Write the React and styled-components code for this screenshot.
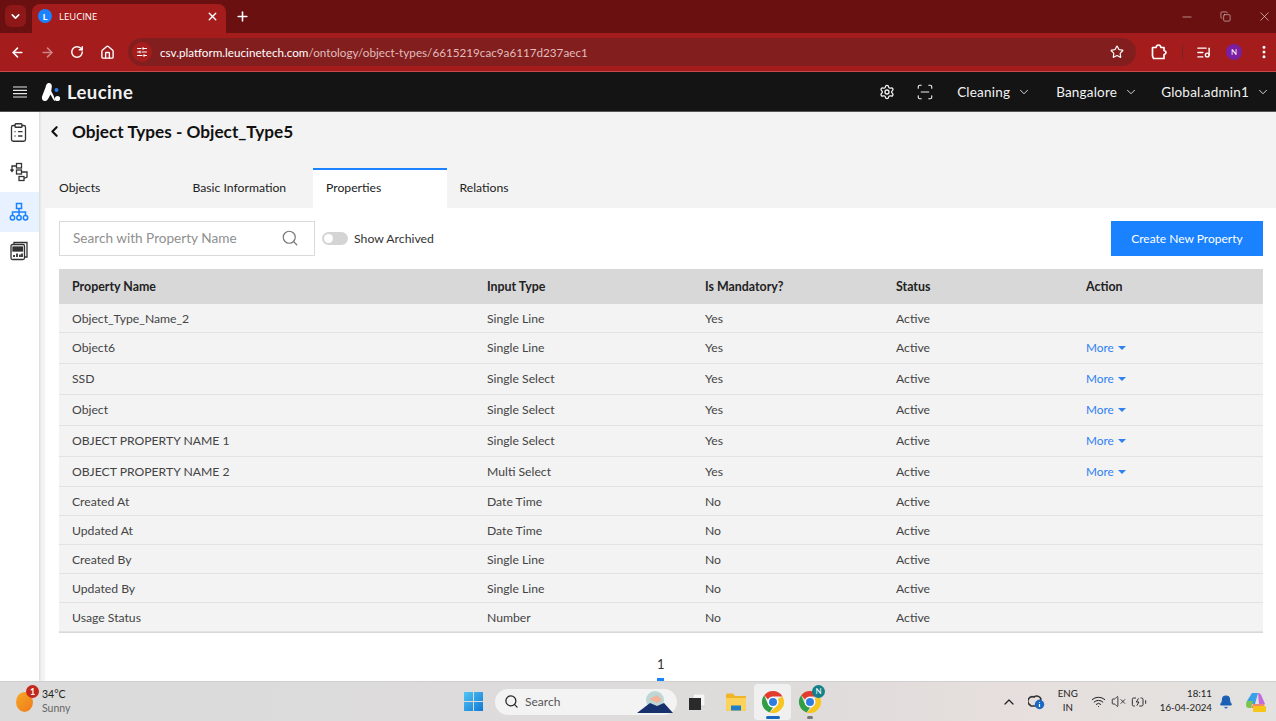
import React from 'react';
import styled, { createGlobalStyle } from 'styled-components';
import {
  ChevronDown, X, Plus, ArrowLeft, ArrowRight, RotateCw, Home, SlidersHorizontal, Star,
  EllipsisVertical, Minus, Settings, ScanLine, ChevronLeft, Search, ClipboardList,
  ChevronUp, Wifi, VolumeX, BatteryCharging, Bell, Copy, ListMusic,
} from 'lucide-react';

const GlobalStyle = createGlobalStyle`
  html, body { margin: 0; padding: 0; height: 100%; overflow: hidden; }
  body { font-family: "Lato", "Open Sans", sans-serif; background: #fff; }
  * { box-sizing: border-box; }
`;

const Page = styled.div`
  width: 1276px;
  height: 721px;
  display: flex;
  flex-direction: column;
  overflow: hidden;
`;

/* browser chrome */
const TabStrip = styled.div`
  height: 33px;
  background: #6b1010;
  display: flex;
  align-items: flex-end;
  padding-left: 5px;
  color: #fff;
`;
const TabMenu = styled.div`
  width: 21px;
  height: 22px;
  margin-bottom: 6px;
  border-radius: 6px;
  background: #8e1717;
  display: flex;
  align-items: center;
  justify-content: center;
`;
const ActiveTab = styled.div`
  width: 194px;
  height: 29px;
  margin-left: 6px;
  padding: 0 7px 5px 6px;
  border-radius: 8px 8px 0 0;
  background: #a51c1c;
  display: flex;
  align-items: center;
  gap: 7px;
  font-family: "Open Sans", sans-serif;
  font-size: 9.5px;
`;
const Favicon = styled.div`
  width: 14px;
  height: 14px;
  border-radius: 50%;
  background: #1a82ff;
  display: flex;
  align-items: center;
  justify-content: center;
  font-size: 9px;
  font-weight: 700;
`;
const TabTitle = styled.span`
  flex: 1;
`;
const NewTab = styled.div`
  margin: 0 0 9px 9px;
  display: flex;
`;
const WindowControls = styled.div`
  margin-left: auto;
  height: 100%;
  display: flex;
  align-items: center;
  gap: 26px;
  padding-right: 4px;
  color: #f0e0e0;
`;
const Toolbar = styled.div`
  height: 39px;
  background: #a51c1c;
  border-bottom: 1px solid #c64a4a;
  display: flex;
  align-items: center;
  padding-left: 10px;
  color: #fff;
`;
const NavButton = styled.div`
  width: 30px;
  display: flex;
  justify-content: flex-start;
  color: ${(p) => (p.$dim ? '#cf8585' : '#fff')};
`;
const AddressBar = styled.div`
  width: 1008px;
  height: 28px;
  margin-left: -2px;
  border-radius: 14px;
  background: #831e1e;
  display: flex;
  align-items: center;
  padding: 0 12px 0 4px;
`;
const SiteIcon = styled.div`
  width: 20px;
  height: 20px;
  border-radius: 50%;
  background: #a51c1c;
  display: flex;
  align-items: center;
  justify-content: center;
  margin-right: 8px;
`;
const Url = styled.div`
  flex: 1;
  font-size: 11.7px;
  color: #e0bcbc;
  white-space: nowrap;
`;
const Host = styled.span`
  color: #fff;
`;
const ToolActions = styled.div`
  display: flex;
  align-items: center;
  margin-left: 15px;
`;
const Divider = styled.div`
  width: 1px;
  height: 14px;
  margin: 0 13px 0 15px;
  background: #7b2020;
`;
const Avatar = styled.div`
  width: 16px;
  height: 16px;
  margin: 0 14px 0 15px;
  border-radius: 50%;
  background: #7a1fa2;
  font-size: 8px;
  display: flex;
  align-items: center;
  justify-content: center;
`;

/* app header */
const AppHeader = styled.header`
  height: 40px;
  background: #141414;
  color: #f2f2f2;
  display: flex;
  align-items: center;
  padding: 0 6px 0 13px;
  border-bottom: 1px solid #555;
`;
const Brand = styled.div`
  display: flex;
  align-items: center;
  gap: 6px;
  margin-left: 14px;
  font-size: 18.5px;
  font-weight: 700;
  letter-spacing: 0.4px;
`;
const HeaderRight = styled.div`
  margin-left: auto;
  display: flex;
  align-items: center;
`;
const HeaderIcon = styled.div`
  display: flex;
  margin-right: ${(p) => p.$gap}px;
`;
const Selector = styled.div`
  display: flex;
  align-items: center;
  gap: 7px;
  margin-left: ${(p) => p.$left || 0}px;
  font-size: 13.5px;
  letter-spacing: 0.2px;
`;

/* body */
const Body = styled.div`
  flex: 1;
  display: flex;
  min-height: 0;
  background: #f3f3f3;
`;
const Sidebar = styled.nav`
  width: 39px;
  background: #fff;
  padding-top: 1px;
  box-shadow: 1px 0 2px rgba(0, 0, 0, 0.12);
`;
const SideItem = styled.div`
  height: 39.5px;
  padding-right: 2px;
  display: flex;
  align-items: center;
  justify-content: center;
  color: ${(p) => (p.$active ? '#1a82ff' : '#333')};
  background: ${(p) => (p.$active ? '#e7f1ff' : 'transparent')};
`;
const Main = styled.main`
  flex: 1;
  min-width: 0;
  display: flex;
  flex-direction: column;
`;
const TitleRow = styled.div`
  height: 56px;
  padding: 0 0 17px 7px;
  display: flex;
  align-items: center;
  gap: 9px;
  color: #111;
`;
const Title = styled.h1`
  margin: 0;
  font-size: 17.2px;
  font-weight: 700;
`;
const Tabs = styled.div`
  height: 40px;
  margin-left: 7px;
  display: flex;
`;
const TabItem = styled.div`
  width: 133.5px;
  padding: 0 0 3px 13px;
  display: flex;
  align-items: center;
  font-size: 12.2px;
  color: #222;
  background: ${(p) => (p.$active ? '#fff' : 'transparent')};
  border-top: 2px solid ${(p) => (p.$active ? '#1a82ff' : 'transparent')};
`;
const Panel = styled.section`
  flex: 1;
  margin-left: 6px;
  padding: 13px 13px 0 14px;
  background: #fff;
  display: flex;
  flex-direction: column;
`;
const Controls = styled.div`
  height: 35px;
  display: flex;
  align-items: center;
  margin-bottom: 13px;
`;
const SearchBox = styled.div`
  width: 256px;
  height: 35px;
  padding: 0 15px 1px 13px;
  border: 1px solid #dadada;
  display: flex;
  align-items: center;
  justify-content: space-between;
  font-size: 13.6px;
  color: #8f8f8f;
`;
const Toggle = styled.div`
  width: 26px;
  height: 13px;
  margin: 0 6px 0 7px;
  padding: 2px;
  border-radius: 7px;
  background: #d4d4d4;
`;
const ToggleKnob = styled.div`
  width: 9px;
  height: 9px;
  border-radius: 50%;
  background: #fff;
`;
const ToggleLabel = styled.span`
  font-size: 12.25px;
  color: #333;
`;
const CreateButton = styled.button`
  margin-left: auto;
  width: 152px;
  height: 35px;
  border: 0;
  background: #1a82ff;
  color: #fff;
  font-family: inherit;
  font-size: 12px;
`;
const Table = styled.div`
  display: flex;
  flex-direction: column;
  border-bottom: 1px solid #d8d8d8;
`;
const Row = styled.div`
  height: ${(p) => p.$height}px;
  padding: 0 0 ${(p) => (p.$lift ? 1 : 0)}px 13px;
  display: grid;
  grid-template-columns: 415px 218px 191px 190px 1fr;
  align-items: center;
  font-size: ${(p) => (p.$head ? 12.4 : 12.2)}px;
  color: ${(p) => (p.$head ? '#222' : '#444')};
  font-weight: ${(p) => (p.$head ? 700 : 400)};
  background: ${(p) => (p.$head ? '#d8d8d8' : '#f3f3f3')};
  border-bottom: ${(p) => (p.$head ? 'none' : '1px solid #e2e2e2')};
`;
const MoreLink = styled.span`
  display: flex;
  align-items: center;
  gap: 4px;
  font-size: 11.8px;
  color: #2f80f0;
`;
const Caret = styled.span`
  width: 0;
  height: 0;
  margin-top: 1px;
  border-left: 4px solid transparent;
  border-right: 4px solid transparent;
  border-top: 4px solid #2f80f0;
`;
const Pager = styled.div`
  flex: 1;
  padding-left: 598px;
  display: flex;
  align-items: flex-end;
`;
const PageNumber = styled.div`
  width: 7px;
  padding-bottom: 6px;
  font-size: 13px;
  color: #333;
  text-align: center;
  border-bottom: 3px solid #1a82ff;
`;

/* taskbar */
const Taskbar = styled.footer`
  height: 40px;
  display: flex;
  align-items: center;
  background: linear-gradient(90deg, #dbdbdb 0%, #dedbdb 60%, #e6dfdd 80%, #e2e2e0 100%);
  border-top: 1px solid #cfcfcf;
  color: #222;
`;
const Weather = styled.div`
  width: 464px;
  padding-left: 16px;
  display: flex;
  align-items: center;
  gap: 9px;
`;
const Sun = styled.div`
  position: relative;
  width: 17px;
  height: 20px;
  border-radius: 50%;
  background: linear-gradient(135deg, #f7a823, #ee7a1c);
`;
const SunBadge = styled.span`
  position: absolute;
  top: -7px;
  right: -6px;
  width: 13px;
  height: 13px;
  border-radius: 50%;
  background: #c4281c;
  color: #fff;
  font-size: 9px;
  font-weight: 700;
  display: flex;
  align-items: center;
  justify-content: center;
`;
const WeatherText = styled.div`
  font-size: 10.5px;
  line-height: 14px;
  padding-bottom: 1px;
`;
const WeatherSub = styled.div`
  color: #666;
`;
const TaskSearch = styled.div`
  width: 182px;
  height: 26px;
  margin-left: 12px;
  padding: 0 4px 0 9px;
  border-radius: 13px;
  background: #f4f3f3;
  display: flex;
  align-items: center;
  gap: 6px;
  font-size: 12px;
  color: #555;
`;
const SearchArt = styled.svg`
  margin-left: auto;
`;
const AppSlot = styled.div`
  position: relative;
  width: 37px;
  height: 36px;
  margin-left: ${(p) => p.$left || 0}px;
  display: flex;
  align-items: center;
  justify-content: center;
  border-radius: 4px;
  background: ${(p) => (p.$active ? '#f1f0f0' : 'transparent')};
`;
const AppMark = styled.span`
  position: absolute;
  bottom: 1px;
  left: 50%;
  transform: translateX(-50%);
  width: ${(p) => (p.$active ? 14 : 6)}px;
  height: 3px;
  border-radius: 2px;
  background: ${(p) => (p.$active ? '#1567c0' : '#777')};
`;
const AppBadge = styled.span`
  position: absolute;
  top: 1px;
  right: 3px;
  width: 13px;
  height: 13px;
  border-radius: 50%;
  background: #14808c;
  color: #fff;
  font-size: 8px;
  display: flex;
  align-items: center;
  justify-content: center;
`;
const Tray = styled.div`
  margin-left: auto;
  display: flex;
  align-items: center;
  padding-right: 9px;
`;
const TrayIcon = styled.div`
  display: flex;
  margin-left: ${(p) => p.$left}px;
`;
const TrayText = styled.div`
  margin-left: ${(p) => p.$left}px;
  padding-bottom: 3px;
  font-size: 9.7px;
  line-height: 14.5px;
  text-align: ${(p) => p.$align};
`;

const rows = [
  ['Object_Type_Name_2', 'Single Line', 'Yes', false, 29],
  ['Object6', 'Single Line', 'Yes', true, 31],
  ['SSD', 'Single Select', 'Yes', true, 31],
  ['Object', 'Single Select', 'Yes', true, 31],
  ['OBJECT PROPERTY NAME 1', 'Single Select', 'Yes', true, 31],
  ['OBJECT PROPERTY NAME 2', 'Multi Select', 'Yes', true, 30],
  ['Created At', 'Date Time', 'No', false, 29],
  ['Updated At', 'Date Time', 'No', false, 29],
  ['Created By', 'Single Line', 'No', false, 29],
  ['Updated By', 'Single Line', 'No', false, 29],
  ['Usage Status', 'Number', 'No', false, 29],
];

const MenuIcon = () => (
  <svg width="14" height="12" viewBox="0 0 14 12" stroke="#e8e8e8" strokeWidth="1.2">
    <path d="M0 1 H14 M0 4.3 H14 M0 7.6 H14 M0 11 H14" />
  </svg>
);

const LeucineLogo = () => (
  <svg width="20" height="20" viewBox="0 0 20 20">
    <path d="M8 1 C5.5 1 5 3.5 4.5 5.5 L1.2 14 C0.2 17 1.8 19 4.2 19 C6 19 6.8 17.5 7.6 16 L9.5 12.5 L12 17 C12.6 18.2 13.4 19 14.5 19 L12.5 13.5 L10.2 9 L10.8 5 C11.1 3 10 1 8 1 Z" fill="#fff" />
    <circle cx="16.5" cy="16.5" r="2.6" fill="#fff" />
    <circle cx="15.5" cy="8" r="2" fill="#2f7df0" />
  </svg>
);

const ExtensionIcon = () => (
  <svg width="16" height="16" viewBox="0 0 16 16" fill="none" stroke="#fff" strokeWidth="1.7" strokeLinejoin="round">
    <path d="M1.5 3.5 H5 Q5.5 1 7.5 1 Q9.5 1 10 3.5 H13 V6.5 Q15 7 15 8.5 Q15 10 13 10.5 V14.5 H2.5 L1.5 12 Z" />
  </svg>
);

const CloudInfoIcon = () => (
  <svg width="17" height="16" viewBox="0 0 17 16">
    <path d="M2 11 A4.5 4.5 0 0 1 6 3 A4.5 4.5 0 0 1 13 5 L8 12 H3 Z" fill="none" stroke="#333" strokeWidth="1.6" />
    <circle cx="11.5" cy="10.5" r="4.7" fill="#1a68c4" />
    <path d="M11.5 8 V8.8 M11.5 10 V13" stroke="#fff" strokeWidth="1.2" />
  </svg>
);

const WorkflowIcon = () => (
  <svg width="20" height="20" viewBox="0 0 20 20" fill="none" stroke="#333" strokeWidth="1.3">
    <rect x="7.5" y="1.5" width="5" height="4.5" />
    <rect x="7.5" y="8" width="5" height="4" />
    <rect x="10" y="14.5" width="5" height="4" />
    <path d="M7.5 4 H3 V9 M1.5 7.5 L3 9.5 L4.5 7.5 M12.5 10 H18 V15 L15 16.5" />
  </svg>
);

const OntologyIcon = () => (
  <svg width="20" height="20" viewBox="0 0 20 20" fill="none" stroke="currentColor" strokeWidth="1.5">
    <rect x="7.5" y="1.5" width="5" height="5" />
    <path d="M10 6.5 V13 M3.5 13.5 V10 H16.5 V13.5" />
    <circle cx="3.5" cy="15.8" r="2.2" />
    <circle cx="10" cy="15.8" r="2.2" />
    <circle cx="16.5" cy="15.8" r="2.2" />
  </svg>
);

const ReportIcon = () => (
  <svg width="20" height="20" viewBox="0 0 20 20" fill="none" stroke="#333" strokeWidth="1.3">
    <rect x="2" y="3.5" width="13.5" height="15" rx="1.5" />
    <path d="M5 3.5 V1.5 H18 V16 H15.5" />
    <rect x="4" y="6" width="9.5" height="4" fill="#333" />
    <path d="M5 16 V14 M8 16 V12.5 M11 16 V13.5 M13 16 V12.5" strokeWidth="1.8" />
  </svg>
);

const ChromeIcon = () => (
  <svg width="24" height="24" viewBox="0 0 24 24">
    <path d="M12 1 A11 11 0 0 1 21.5 6.5 L12 6.5 A5.5 5.5 0 0 0 7 9.5 L3.2 5.3 A11 11 0 0 1 12 1 Z" fill="#e33b2e" />
    <path d="M3.2 5.3 L7.2 14.7 A5.5 5.5 0 0 0 12 17.5 L8.7 22.5 A11 11 0 0 1 3.2 5.3 Z" fill="#2f9e44" />
    <path d="M21.5 6.5 A11 11 0 0 1 8.7 22.5 L14.8 16.8 A5.5 5.5 0 0 0 16.8 9 Z" fill="#f7c51e" />
    <circle cx="12" cy="12" r="5.2" fill="#fff" />
    <circle cx="12" cy="12" r="4" fill="#2f7de1" />
  </svg>
);

const WindowsIcon = () => (
  <svg width="19" height="19" viewBox="0 0 19 19">
    <defs>
      <linearGradient id="win" x1="0" y1="0" x2="1" y2="1">
        <stop offset="0" stopColor="#52c6f5" />
        <stop offset="1" stopColor="#0f78d4" />
      </linearGradient>
    </defs>
    <path d="M0 0 H9 V9 H0 Z M10 0 H19 V9 H10 Z M0 10 H9 V19 H0 Z M10 10 H19 V19 H10 Z" fill="url(#win)" />
  </svg>
);

const FolderIcon = () => (
  <svg width="20" height="18" viewBox="0 0 20 18">
    <path d="M0 2 Q0 0.5 1.5 0.5 H7 L9 3 H20 V17.5 H0 Z" fill="#f0b429" />
    <path d="M0 5 H20 V17.5 H0 Z" fill="#fbd35b" />
    <rect x="5" y="12.5" width="10" height="5" fill="#1b7fc9" />
  </svg>
);

const TaskViewIcon = () => (
  <svg width="16" height="16" viewBox="0 0 16 16">
    <rect x="4" y="0" width="12" height="12" fill="#f5f5f5" stroke="#bbb" strokeWidth="0.5" />
    <rect x="0" y="4" width="12" height="12" fill="#2a2a2a" />
  </svg>
);

const CopilotIcon = () => (
  <svg width="22" height="22" viewBox="0 0 22 22">
    <path d="M7 2 H13 L10 13 H2 Q1 13 2 10 Z" fill="#3aa0e8" />
    <path d="M13 2 Q16 2 17 6 L20 13 H14 Z" fill="#c56be0" />
    <path d="M2 10 L8 10 L6 17 H4 Q1 17 1 14 Z" fill="#7cc44c" />
    <path d="M8 13 H20 L17 17 H6 Z" fill="#f08a6c" />
    <rect x="8" y="15" width="13" height="6" rx="1" fill="#f5c518" />
  </svg>
);

const SearchArtwork = () => (
  <SearchArt width="36" height="22" viewBox="0 0 36 22">
    <circle cx="18" cy="9" r="9" fill="#bcd7d5" />
    <path d="M0 22 L13 12 L20 15 L27 12 L36 22 Z" fill="#17306e" />
    <path d="M12 8 L20 4 L25 9 L20 12 Z" fill="#f3b49b" />
  </SearchArt>
);

export default function App() {
  return (
    <Page>
      <GlobalStyle />
      <TabStrip>
        <TabMenu><ChevronDown size={13} strokeWidth={3} /></TabMenu>
        <ActiveTab>
          <Favicon>L</Favicon>
          <TabTitle>LEUCINE</TabTitle>
          <X size={13} strokeWidth={2.5} />
        </ActiveTab>
        <NewTab><Plus size={15} strokeWidth={2.5} /></NewTab>
        <WindowControls>
          <Minus size={14} strokeWidth={1} />
          <Copy size={11} strokeWidth={1.2} />
          <X size={15} strokeWidth={1} />
        </WindowControls>
      </TabStrip>
      <Toolbar>
        <NavButton><ArrowLeft size={15} strokeWidth={2.5} /></NavButton>
        <NavButton $dim><ArrowRight size={15} strokeWidth={2.5} /></NavButton>
        <NavButton><RotateCw size={14} strokeWidth={2.5} /></NavButton>
        <NavButton><Home size={15} strokeWidth={2.2} /></NavButton>
        <AddressBar>
          <SiteIcon><SlidersHorizontal size={12} strokeWidth={2} /></SiteIcon>
          <Url><Host>csv.platform.leucinetech.com</Host>/ontology/object-types/6615219cac9a6117d237aec1</Url>
          <Star size={14} strokeWidth={2} />
        </AddressBar>
        <ToolActions>
          <ExtensionIcon />
          <Divider />
          <ListMusic size={15} strokeWidth={2.2} />
          <Avatar>N</Avatar>
          <EllipsisVertical size={16} strokeWidth={2.5} />
        </ToolActions>
      </Toolbar>
      <AppHeader>
        <MenuIcon />
        <Brand><LeucineLogo />Leucine</Brand>
        <HeaderRight>
          <HeaderIcon $gap={21}><Settings size={16} strokeWidth={2} /></HeaderIcon>
          <HeaderIcon $gap={0}><ScanLine size={18} strokeWidth={1.5} /></HeaderIcon>
          <Selector $left={23}>Cleaning <ChevronDown size={14} strokeWidth={1.5} /></Selector>
          <Selector $left={25}>Bangalore <ChevronDown size={14} strokeWidth={1.5} /></Selector>
          <Selector $left={23}>Global.admin1 <ChevronDown size={14} strokeWidth={1.5} /></Selector>
        </HeaderRight>
      </AppHeader>
      <Body>
        <Sidebar>
          <SideItem><ClipboardList size={21} strokeWidth={1.5} /></SideItem>
          <SideItem><WorkflowIcon /></SideItem>
          <SideItem $active><OntologyIcon /></SideItem>
          <SideItem><ReportIcon /></SideItem>
        </Sidebar>
        <Main>
          <TitleRow>
            <ChevronLeft size={17} strokeWidth={3} />
            <Title>Object Types - Object_Type5</Title>
          </TitleRow>
          <Tabs>
            <TabItem>Objects</TabItem>
            <TabItem>Basic Information</TabItem>
            <TabItem $active>Properties</TabItem>
            <TabItem>Relations</TabItem>
          </Tabs>
          <Panel>
            <Controls>
              <SearchBox>
                Search with Property Name
                <Search size={18} strokeWidth={1.6} color="#777" />
              </SearchBox>
              <Toggle><ToggleKnob /></Toggle>
              <ToggleLabel>Show Archived</ToggleLabel>
              <CreateButton>Create New Property</CreateButton>
            </Controls>
            <Table>
              <Row $head $lift $height={35}>
                <span>Property Name</span>
                <span>Input Type</span>
                <span>Is Mandatory?</span>
                <span>Status</span>
                <span>Action</span>
              </Row>
              {rows.map(([name, type, required, more, height]) => (
                <Row key={name} $lift={more} $height={height}>
                  <span>{name}</span>
                  <span>{type}</span>
                  <span>{required}</span>
                  <span>Active</span>
                  {more ? <MoreLink>More <Caret /></MoreLink> : <span />}
                </Row>
              ))}
            </Table>
            <Pager><PageNumber>1</PageNumber></Pager>
          </Panel>
        </Main>
      </Body>
      <Taskbar>
        <Weather>
          <Sun><SunBadge>1</SunBadge></Sun>
          <WeatherText>
            34°C
            <WeatherSub>Sunny</WeatherSub>
          </WeatherText>
        </Weather>
        <WindowsIcon />
        <TaskSearch>
          <Search size={15} strokeWidth={2} color="#222" />
          Search
          <SearchArtwork />
        </TaskSearch>
        <AppSlot $left={1}><TaskViewIcon /></AppSlot>
        <AppSlot $left={2}><FolderIcon /></AppSlot>
        <AppSlot $active><ChromeIcon /><AppMark $active /></AppSlot>
        <AppSlot><ChromeIcon /><AppBadge>N</AppBadge><AppMark /></AppSlot>
        <Tray>
          <TrayIcon $left={0}><ChevronUp size={16} strokeWidth={1.8} /></TrayIcon>
          <TrayIcon $left={11}><CloudInfoIcon /></TrayIcon>
          <TrayText $left={13} $align="center">ENG<br />IN</TrayText>
          <TrayIcon $left={13}><Wifi size={15} strokeWidth={1.6} /></TrayIcon>
          <TrayIcon $left={5}><VolumeX size={15} strokeWidth={1.4} /></TrayIcon>
          <TrayIcon $left={5}><BatteryCharging size={16} strokeWidth={1.4} /></TrayIcon>
          <TrayText $left={13} $align="right">18:11<br />16-04-2024</TrayText>
          <TrayIcon $left={7}><Bell size={14} fill="#1a5fb4" color="#1a5fb4" /></TrayIcon>
          <TrayIcon $left={12}><CopilotIcon /></TrayIcon>
        </Tray>
      </Taskbar>
    </Page>
  );
}
